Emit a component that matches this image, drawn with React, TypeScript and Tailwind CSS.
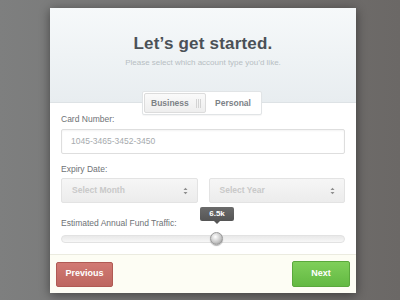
import React from "react";

export default function App() {
  return (
    <div
      className="w-[400px] h-[300px] overflow-hidden flex bg-gradient-to-r from-[#7e7f7f] to-[#6b6866] pt-[8px] pl-[50px]"
      style={{ fontFamily: '"Liberation Sans", Arial, sans-serif' }}
    >
      <div className="w-[306px] h-[285px] bg-white flex flex-col shadow-[0_2px_10px_rgba(0,0,0,0.45)]">
        {/* Header */}
        <div className="h-[95px] bg-gradient-to-b from-[#f6f9fa] to-[#e8edf0] border-b border-[#dde2e5] flex flex-col items-center relative">
          <div className="mt-[25px] text-[17px] leading-[22px] font-bold text-[#4b5157] tracking-[0.2px]">
            Let’s get started.
          </div>
          <div className="mt-[2px] text-[8px] leading-[12px] text-[#b7bec3]">
            Please select which account type you’d like.
          </div>
          <div className="absolute left-[92px] top-[83px] w-[120px] h-[24px] flex bg-white border border-[#e1e4e6] rounded-[2px] p-[1px] shadow-[0_1px_1px_rgba(0,0,0,0.04)]">
            <div className="w-[62px] flex items-center justify-between pl-[6px] pr-[4px] bg-gradient-to-b from-[#fafafa] to-[#eeeeee] border border-[#dcdcdc] rounded-[2px]">
              <span className="text-[8.5px] font-bold text-[#7c8287]">Business</span>
              <span className="flex gap-[1px] h-[9px]">
                <span className="w-[1px] bg-[#d3d3d3]" />
                <span className="w-[1px] bg-[#d3d3d3]" />
                <span className="w-[1px] bg-[#d3d3d3]" />
              </span>
            </div>
            <div className="flex-1 flex items-center justify-center">
              <span className="text-[8.5px] font-bold text-[#7c8287]">Personal</span>
            </div>
          </div>
        </div>

        {/* Body */}
        <div className="flex-1 flex flex-col px-[11px] pt-[11px]">
          <div className="text-[8.5px] leading-[10px] text-[#6e7276]">Card Number:</div>
          <div className="mt-[5px] h-[25px] border border-[#dedede] rounded-[2px] flex items-center pl-[9px] shadow-[inset_0_1px_2px_rgba(0,0,0,0.05)]">
            <span className="text-[8.5px] text-[#a6aaad]">1045-3465-3452-3450</span>
          </div>

          <div className="mt-[10px] text-[8.5px] leading-[10px] text-[#6e7276]">Expiry Date:</div>
          <div className="mt-[4px] flex gap-[11px]">
            {["Select Month", "Select Year"].map((t) => (
              <div
                key={t}
                className="flex-1 h-[25px] flex items-center justify-between pl-[10px] pr-[9px] bg-gradient-to-b from-[#f6f6f6] to-[#ececec] border border-[#e3e3e3] rounded-[2px]"
              >
                <span className="text-[8.5px] font-bold text-[#c9c9c9]">{t}</span>
                <svg width="5" height="8" viewBox="0 0 5 8">
                  <path d="M0.5 3 L2.5 0.8 L4.5 3 Z" fill="#8e8e8e" />
                  <path d="M0.5 5 L2.5 7.2 L4.5 5 Z" fill="#8e8e8e" />
                </svg>
              </div>
            ))}
          </div>

          <div className="mt-[15px] relative">
            <div className="text-[8.5px] leading-[10px] text-[#6e7276]">Estimated Annual Fund Traffic:</div>
            <div className="absolute left-[139px] top-[-11px] flex flex-col items-center">
              <div className="w-[34px] h-[14px] bg-gradient-to-b from-[#6b6b6b] to-[#555555] rounded-[2px] flex items-center justify-center">
                <span className="text-[8px] font-bold text-white">6.5k</span>
              </div>
              <div className="w-0 h-0 border-l-[3px] border-r-[3px] border-t-[3px] border-l-transparent border-r-transparent border-t-[#555555]" />
            </div>
          </div>
          <div className="mt-[7px] relative h-[8px] rounded-full bg-gradient-to-b from-[#e9e9e9] to-[#f7f7f7] border border-[#e2e2e2]">
            <div className="absolute left-[148px] top-[-4px] w-[13px] h-[13px] rounded-full bg-[radial-gradient(circle_at_40%_35%,#ffffff,#c8c8c8_55%,#8a8a8a)] border border-[#9a9a9a] shadow-[0_1px_1px_rgba(0,0,0,0.3)]" />
          </div>
        </div>

        {/* Footer */}
        <div className="h-[39px] bg-[#fdfdf4] border-t border-[#ebebe0] flex items-center justify-between pl-[6px] pr-[6px]">
          <div className="w-[57px] h-[25px] rounded-[2px] bg-gradient-to-b from-[#d17a73] to-[#bd6660] border border-[#b05a54] flex items-center justify-center">
            <span className="text-[9px] font-bold text-white">Previous</span>
          </div>
          <div className="w-[58px] h-[26px] rounded-[2px] bg-gradient-to-b from-[#7fcf5a] to-[#63b942] border border-[#5aa83c] flex items-center justify-center">
            <span className="text-[9px] font-bold text-white">Next</span>
          </div>
        </div>
      </div>
    </div>
  );
}
